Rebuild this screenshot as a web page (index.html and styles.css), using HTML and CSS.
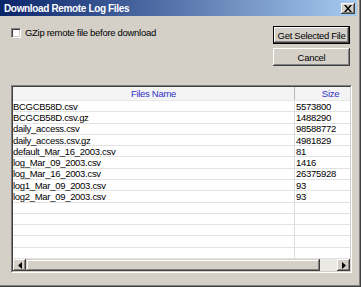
FILE: index.html
```html
<!DOCTYPE html>
<html>
<head>
<meta charset="utf-8">
<link rel="stylesheet" href="styles.css">
</head>
<body>
<div class="window">
  <div class="titlebar">
    <span class="title">Download Remote Log Files</span>
    <span class="close"><svg width="8" height="7" viewBox="0 0 8 7"><path d="M0 0h2l2 2.5L6 0h2L5 3.5 8 7H6L4 4.5 2 7H0l3-3.5z" fill="#000"/></svg></span>
  </div>
  <div class="content">
    <div class="top">
      <label class="check"><span class="box"></span><span class="label">GZip remote file before download</span></label>
      <div class="buttons">
        <div class="btn default"><span>Get Selected File</span></div>
        <div class="btn"><span>Cancel</span></div>
      </div>
    </div>
    <div class="grid">
      <div class="inner">
        <div class="header">
          <div class="c1">Files Name</div>
          <div class="c2">Size</div>
        </div>
        <div class="rows">
          <div class="row"><div class="c1">BCGCB58D.csv</div><div class="c2">5573800</div></div>
          <div class="row"><div class="c1">BCGCB58D.csv.gz</div><div class="c2">1488290</div></div>
          <div class="row"><div class="c1">daily_access.csv</div><div class="c2">98588772</div></div>
          <div class="row"><div class="c1">daily_access.csv.gz</div><div class="c2">4981829</div></div>
          <div class="row"><div class="c1">default_Mar_16_2003.csv</div><div class="c2">81</div></div>
          <div class="row"><div class="c1">log_Mar_09_2003.csv</div><div class="c2">1416</div></div>
          <div class="row"><div class="c1">log_Mar_16_2003.csv</div><div class="c2">26375928</div></div>
          <div class="row"><div class="c1">log1_Mar_09_2003.csv</div><div class="c2">93</div></div>
          <div class="row"><div class="c1">log2_Mar_09_2003.csv</div><div class="c2">93</div></div>
          <div class="row"><div class="c1"></div><div class="c2"></div></div>
          <div class="row"><div class="c1"></div><div class="c2"></div></div>
          <div class="row"><div class="c1"></div><div class="c2"></div></div>
          <div class="row"><div class="c1"></div><div class="c2"></div></div>
          <div class="row"><div class="c1"></div><div class="c2"></div></div>
        </div>
        <div class="hscroll">
          <div class="sbtn"><svg width="4" height="7" viewBox="0 0 4 7"><path d="M4 0v7L0 3.5z" fill="#000"/></svg></div>
          <div class="thumb"></div>
          <div class="track"></div>
          <div class="sbtn"><svg width="4" height="7" viewBox="0 0 4 7"><path d="M0 0v7l4-3.5z" fill="#000"/></svg></div>
        </div>
      </div>
    </div>
  </div>
</div>
</body>
</html>
```

FILE: styles.css
```css
html, body {
  margin: 0;
  padding: 0;
}
body {
  width: 361px;
  height: 287px;
  overflow: hidden;
  background: #d4d0c8;
  font-family: "Liberation Sans", Arial, sans-serif;
  font-size: 9.5px;
  letter-spacing: -0.3px;
  color: #000;
}
.window {
  width: 361px;
  height: 287px;
  box-sizing: border-box;
  padding: 0 4px 4px 0;
  box-shadow: inset -1px -1px 0 #404040, inset -2px -2px 0 #808080;
  display: flex;
  flex-direction: column;
}
.titlebar {
  height: 16px;
  flex: none;
  display: flex;
  align-items: center;
  justify-content: space-between;
  padding: 0 2px 0 4px;
  background: linear-gradient(to right, #0a246a, #a6caf0);
}
.title {
  color: #fff;
  font-weight: bold;
  font-size: 10px;
  letter-spacing: -0.35px;
}
.close {
  width: 14px;
  height: 11px;
  box-sizing: border-box;
  background: #d4d0c8;
  display: flex;
  align-items: center;
  justify-content: center;
  box-shadow: inset -1px -1px 0 #404040, inset 1px 1px 0 #fff, inset -2px -2px 0 #808080;
}
.content {
  padding: 0 7px 0 11px;
  flex: 1;
}
.top {
  display: flex;
  justify-content: space-between;
  align-items: flex-start;
}
.check {
  display: flex;
  align-items: center;
  gap: 4px;
  margin-top: 11px;
}
.box {
  width: 10px;
  height: 10px;
  box-sizing: border-box;
  background: #fff;
  border-top: 1px solid #808080;
  border-left: 1px solid #808080;
  border-right: 1px solid #fff;
  border-bottom: 1px solid #fff;
  box-shadow: inset 1px 1px 0 #404040, inset -1px -1px 0 #d4d0c8;
}
.buttons {
  margin-top: 10px;
  display: flex;
  flex-direction: column;
  gap: 4px;
  width: 77px;
}
.btn {
  height: 18px;
  box-sizing: border-box;
  display: flex;
  align-items: center;
  justify-content: center;
  white-space: nowrap;
  background: #d4d0c8;
  box-shadow: inset -1px -1px 0 #404040, inset 1px 1px 0 #fff, inset -2px -2px 0 #808080;
}
.btn.default {
  border: 1px solid #000;
}
.grid {
  margin-top: 19px;
  width: 341px;
  height: 188px;
  box-sizing: border-box;
  border-top: 1px solid #808080;
  border-left: 1px solid #808080;
  border-right: 1px solid #fff;
  border-bottom: 1px solid #fff;
}
.inner {
  height: 100%;
  box-sizing: border-box;
  border-top: 1px solid #404040;
  border-left: 1px solid #404040;
  border-right: 1px solid #d4d0c8;
  border-bottom: 1px solid #d4d0c8;
  background: #fff;
  display: flex;
  flex-direction: column;
  overflow: hidden;
}
.header, .row {
  display: flex;
  white-space: nowrap;
}
.header {
  height: 14px;
  flex: none;
  background: #f4f4f4;
  color: #3030c8;
  align-items: center;
  border-bottom: 1px solid #e8e8e8;
  box-sizing: border-box;
}
.c1 {
  width: 281px;
  flex: none;
}
.c2 {
  width: 71px;
  flex: none;
  box-sizing: border-box;
  border-left: 1px solid #dcdcdc;
  padding-left: 1px;
}
.header .c1, .header .c2 {
  text-align: center;
}
.header .c2 {
  border-left: 1px solid #b8b8b8;
  height: 100%;
  line-height: 13px;
}
.rows {
  flex: none;
  height: 158px;
  display: grid;
  grid-template-rows: repeat(14, 1fr);
}
.row {
  align-items: center;
  border-bottom: 1px solid #e2e2e2;
  box-sizing: border-box;
  line-height: 11px;
  min-height: 0;
}
.row .c2 {
  align-self: stretch;
  display: flex;
  align-items: center;
}
.hscroll {
  flex: 1;
  display: flex;
  background: #d4d0c8;
}
.sbtn {
  width: 13px;
  flex: none;
  box-sizing: border-box;
  display: flex;
  align-items: center;
  justify-content: center;
  background: #d4d0c8;
  box-shadow: inset -1px -1px 0 #404040, inset 1px 1px 0 #fff, inset -2px -2px 0 #808080;
}
.thumb {
  width: 294px;
  flex: none;
  box-shadow: inset -1px -1px 0 #404040, inset 1px 1px 0 #d4d0c8, inset -2px -2px 0 #808080, inset 2px 2px 0 #fff;
}
.track {
  flex: 1;
  background: #ebe9e4;
}
```
